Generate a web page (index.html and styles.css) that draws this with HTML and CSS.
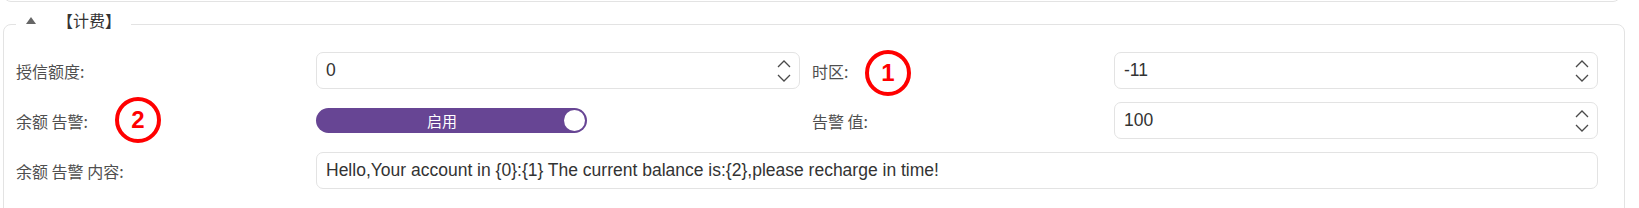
FILE: index.html
```html
<!DOCTYPE html>
<html lang="zh-CN">
<head>
    <meta charset="UTF-8">
    <meta name="viewport" content="width=device-width, initial-scale=1.0">
    <title>计费</title>
    <link rel="stylesheet" href="styles.css">
</head>
<body>
    <div class="prev-panel"></div>

    <fieldset class="panel">
        <legend><span class="caret"></span>【计费】</legend>

        <div class="form-grid">
            <label class="lbl">授信额度:</label>
            <div class="field">
                <span>0</span>
                <svg class="spin" width="14" height="22" viewBox="0 0 14 22"><polyline points="1,7 7,1 13,7"/><polyline points="1,15 7,21 13,15"/></svg>
            </div>
            <label class="lbl lbl-right">时区:</label>
            <div class="field">
                <span>-11</span>
                <svg class="spin" width="14" height="22" viewBox="0 0 14 22"><polyline points="1,7 7,1 13,7"/><polyline points="1,15 7,21 13,15"/></svg>
            </div>

            <label class="lbl">余额 告警:</label>
            <div class="switch-cell">
                <div class="switch">
                    <span class="switch-text">启用</span>
                    <span class="knob"></span>
                </div>
            </div>
            <label class="lbl lbl-right">告警 值:</label>
            <div class="field">
                <span>100</span>
                <svg class="spin" width="14" height="22" viewBox="0 0 14 22"><polyline points="1,7 7,1 13,7"/><polyline points="1,15 7,21 13,15"/></svg>
            </div>

            <label class="lbl">余额 告警 内容:</label>
            <div class="field wide">
                <span>Hello,Your account in {0}:{1} The current balance is:{2},please recharge in time!</span>
            </div>
        </div>

        <!-- 标注圈 -->
        <span class="mark mark-1">1</span>
        <span class="mark mark-2">2</span>
    </fieldset>
</body>
</html>
```

FILE: styles.css
```css
* {
  margin: 0;
  padding: 0;
  box-sizing: border-box;
}

body {
  background: #fff;
  font-family: "Liberation Sans", "Noto Sans CJK SC", sans-serif;
  color: #444;
  width: 1639px;
  height: 208px;
  overflow: hidden;
}

.prev-panel {
  margin: -20px 18px 0 3px;
  height: 22px;
  border: 1px solid #e3e3e3;
  border-radius: 8px;
}

.panel {
  position: relative;
  margin: 8px 14px 0 3px;
  height: 220px;
  border: 1px solid #e3e3e3;
  border-radius: 8px;
  padding: 0 26px 0 12px;
}

.panel legend {
  margin-left: 0;
  padding: 0 10px 8px 10px;
  font-family: "Noto Sans CJK SC", sans-serif;
  font-size: 16px;
  line-height: 20px;
  color: #333;
}

.caret {
  display: inline-block;
  width: 0;
  height: 0;
  border-left: 5.5px solid transparent;
  border-right: 5.5px solid transparent;
  border-bottom: 7px solid #666;
  margin-right: 21px;
  vertical-align: 3px;
}

.form-grid {
  display: grid;
  grid-template-columns: 300px 1fr 314px 1fr;
  row-gap: 13px;
  align-items: center;
  margin-top: 14px;
}

.lbl {
  font-family: "Noto Sans CJK SC", sans-serif;
  font-size: 16px;
  color: #4f4f4f;
}

.lbl-right {
  padding-left: 12px;
}

.field {
  height: 37px;
  border: 1px solid #e3e3e3;
  border-radius: 7px;
  display: flex;
  align-items: center;
  justify-content: space-between;
  padding: 0 8px 0 9px;
  font-size: 17.5px;
  color: #333;
}

.field.wide {
  grid-column: 2 / 5;
}

.spin {
  fill: none;
  stroke: #4a4a4a;
  stroke-width: 1.3;
}

.switch-cell {
  display: flex;
}

.switch {
  width: 271px;
  height: 25px;
  border-radius: 13px;
  background: #674594;
  display: flex;
  align-items: center;
  padding: 0 2px 0 0;
}

.switch-text {
  flex: 1;
  text-align: center;
  color: #fff;
  font-family: "Noto Sans CJK SC", sans-serif;
  font-size: 15px;
  padding-left: 4px;
}

.knob {
  width: 21px;
  height: 21px;
  border-radius: 50%;
  background: #fff;
}

.mark {
  position: absolute;
  width: 46px;
  height: 46px;
  border: 4.5px solid #f00;
  border-radius: 50%;
  color: #f00;
  font-family: "Liberation Sans", sans-serif;
  font-weight: bold;
  font-size: 24px;
  display: flex;
  align-items: center;
  justify-content: center;
}

.mark-1 {
  left: 861px;
  top: 12px;
}

.mark-2 {
  left: 111px;
  top: 59px;
}
```
